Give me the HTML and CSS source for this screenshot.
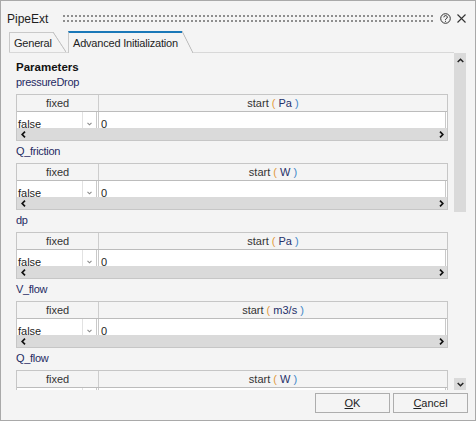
FILE: index.html
```html
<!DOCTYPE html>
<html lang="en">
<head>
    <meta charset="UTF-8">
    <title>PipeExt</title>
    <link rel="stylesheet" href="styles.css">
</head>
<body>
    <div class="dialog">
        <div class="titlebar">
            <span class="title">PipeExt</span>
            <div class="grip"></div>
            <svg class="help" width="11" height="11" viewBox="0 0 11 11">
                <circle cx="5.5" cy="5.5" r="4.8" fill="none" stroke="#333" stroke-width="1"/>
                <path d="M3.9 4.3 A1.7 1.6 0 1 1 6.2 5.7 C5.6 6 5.5 6.3 5.5 7" fill="none" stroke="#333" stroke-width="1"/>
                <rect x="5" y="7.8" width="1" height="1" fill="#333"/>
            </svg>
            <svg class="close" width="9" height="9" viewBox="0 0 9 9">
                <path d="M0.5 0.5 L8.5 8.5 M8.5 0.5 L0.5 8.5" stroke="#333" stroke-width="1.1"/>
            </svg>
        </div>

        <div class="tabs">
            <div class="tab tab-general">General</div>
            <div class="tab active">Advanced Initialization</div>
        </div>

        <div class="panel">
            <div class="scroll">
                <div class="heading">Parameters</div>

                <div class="param">
                    <div class="param-name">pressureDrop</div>
                    <div class="grid">
                        <div class="grid-head">
                            <div class="col-fixed">fixed</div>
                            <div class="col-start">start <span class="po">(</span><span class="unit"> Pa </span><span class="pc">)</span></div>
                        </div>
                        <div class="grid-row">
                            <div class="cell-fixed">
                                <div class="cell-text">false</div>
                                <div class="drop"><svg width="5" height="4" viewBox="0 0 5 4"><path d="M0.5 0.8 L2.5 2.8 L4.5 0.8" fill="none" stroke="#8a8a8a" stroke-width="1.1"/></svg></div>
                            </div>
                            <div class="cell-value">0</div>
                        </div>
                        <div class="hscroll">
                            <svg width="5" height="7" viewBox="0 0 5 7"><path d="M4 0.7 L1.2 3.5 L4 6.3" fill="none" stroke="#111" stroke-width="1.7"/></svg>
                            <svg width="5" height="7" viewBox="0 0 5 7"><path d="M1 0.7 L3.8 3.5 L1 6.3" fill="none" stroke="#111" stroke-width="1.7"/></svg>
                        </div>
                    </div>
                </div>

                <div class="param">
                    <div class="param-name">Q_friction</div>
                    <div class="grid">
                        <div class="grid-head">
                            <div class="col-fixed">fixed</div>
                            <div class="col-start">start <span class="po">(</span><span class="unit"> W </span><span class="pc">)</span></div>
                        </div>
                        <div class="grid-row">
                            <div class="cell-fixed">
                                <div class="cell-text">false</div>
                                <div class="drop"><svg width="5" height="4" viewBox="0 0 5 4"><path d="M0.5 0.8 L2.5 2.8 L4.5 0.8" fill="none" stroke="#8a8a8a" stroke-width="1.1"/></svg></div>
                            </div>
                            <div class="cell-value">0</div>
                        </div>
                        <div class="hscroll">
                            <svg width="5" height="7" viewBox="0 0 5 7"><path d="M4 0.7 L1.2 3.5 L4 6.3" fill="none" stroke="#111" stroke-width="1.7"/></svg>
                            <svg width="5" height="7" viewBox="0 0 5 7"><path d="M1 0.7 L3.8 3.5 L1 6.3" fill="none" stroke="#111" stroke-width="1.7"/></svg>
                        </div>
                    </div>
                </div>

                <div class="param">
                    <div class="param-name">dp</div>
                    <div class="grid">
                        <div class="grid-head">
                            <div class="col-fixed">fixed</div>
                            <div class="col-start">start <span class="po">(</span><span class="unit"> Pa </span><span class="pc">)</span></div>
                        </div>
                        <div class="grid-row">
                            <div class="cell-fixed">
                                <div class="cell-text">false</div>
                                <div class="drop"><svg width="5" height="4" viewBox="0 0 5 4"><path d="M0.5 0.8 L2.5 2.8 L4.5 0.8" fill="none" stroke="#8a8a8a" stroke-width="1.1"/></svg></div>
                            </div>
                            <div class="cell-value">0</div>
                        </div>
                        <div class="hscroll">
                            <svg width="5" height="7" viewBox="0 0 5 7"><path d="M4 0.7 L1.2 3.5 L4 6.3" fill="none" stroke="#111" stroke-width="1.7"/></svg>
                            <svg width="5" height="7" viewBox="0 0 5 7"><path d="M1 0.7 L3.8 3.5 L1 6.3" fill="none" stroke="#111" stroke-width="1.7"/></svg>
                        </div>
                    </div>
                </div>

                <div class="param">
                    <div class="param-name">V_flow</div>
                    <div class="grid">
                        <div class="grid-head">
                            <div class="col-fixed">fixed</div>
                            <div class="col-start">start <span class="po">(</span><span class="unit"> m3/s </span><span class="pc">)</span></div>
                        </div>
                        <div class="grid-row">
                            <div class="cell-fixed">
                                <div class="cell-text">false</div>
                                <div class="drop"><svg width="5" height="4" viewBox="0 0 5 4"><path d="M0.5 0.8 L2.5 2.8 L4.5 0.8" fill="none" stroke="#8a8a8a" stroke-width="1.1"/></svg></div>
                            </div>
                            <div class="cell-value">0</div>
                        </div>
                        <div class="hscroll">
                            <svg width="5" height="7" viewBox="0 0 5 7"><path d="M4 0.7 L1.2 3.5 L4 6.3" fill="none" stroke="#111" stroke-width="1.7"/></svg>
                            <svg width="5" height="7" viewBox="0 0 5 7"><path d="M1 0.7 L3.8 3.5 L1 6.3" fill="none" stroke="#111" stroke-width="1.7"/></svg>
                        </div>
                    </div>
                </div>

                <div class="param">
                    <div class="param-name">Q_flow</div>
                    <div class="grid">
                        <div class="grid-head">
                            <div class="col-fixed">fixed</div>
                            <div class="col-start">start <span class="po">(</span><span class="unit"> W </span><span class="pc">)</span></div>
                        </div>
                        <div class="grid-row">
                            <div class="cell-fixed">
                                <div class="cell-text">false</div>
                                <div class="drop"><svg width="5" height="4" viewBox="0 0 5 4"><path d="M0.5 0.8 L2.5 2.8 L4.5 0.8" fill="none" stroke="#8a8a8a" stroke-width="1.1"/></svg></div>
                            </div>
                            <div class="cell-value">0</div>
                        </div>
                        <div class="hscroll">
                            <svg width="5" height="7" viewBox="0 0 5 7"><path d="M4 0.7 L1.2 3.5 L4 6.3" fill="none" stroke="#111" stroke-width="1.7"/></svg>
                            <svg width="5" height="7" viewBox="0 0 5 7"><path d="M1 0.7 L3.8 3.5 L1 6.3" fill="none" stroke="#111" stroke-width="1.7"/></svg>
                        </div>
                    </div>
                </div>
            </div>

            <div class="vscroll">
                <div class="vthumb">
                    <svg width="7" height="5" viewBox="0 0 7 5"><path d="M0.7 4 L3.5 1.2 L6.3 4" fill="none" stroke="#222" stroke-width="1.5"/></svg>
                </div>
                <div class="vdown">
                    <svg width="7" height="5" viewBox="0 0 7 5"><path d="M0.7 1 L3.5 3.8 L6.3 1" fill="none" stroke="#222" stroke-width="1.5"/></svg>
                </div>
            </div>
        </div>

        <div class="footer">
            <button type="button"><u>O</u>K</button>
            <button type="button"><u>C</u>ancel</button>
        </div>
    </div>
</body>
</html>
```

FILE: styles.css
```css
body {
    margin: 0;
    font-family: "Liberation Sans", Arial, sans-serif;
    font-size: 11px;
    color: #1e1e1e;
}
.dialog {
    width: 476px;
    height: 421px;
    box-sizing: border-box;
    border: 1px solid #a9a9a9;
    background-color: #f4f4f4;
    display: flex;
    flex-direction: column;
}

/* title bar */
.titlebar {
    height: 30px;
    flex: none;
    box-sizing: border-box;
    padding: 5px 9px 0 6px;
    display: flex;
    align-items: center;
}
.title {
    font-size: 12px;
    margin-top: 1px;
}
.grip {
    flex: 1;
    height: 7px;
    margin: 0 6px 0 15px;
    background-image: linear-gradient(90deg, transparent 2px, #f4f4f4 2px), linear-gradient(#8e8e8e 2px, transparent 2px);
    background-size: 4px 5px;
}
.help {
    display: block;
    margin-right: 6px;
}
.close {
    display: block;
}

/* tabs */
.tabs {
    height: 22px;
    flex: none;
    box-sizing: border-box;
    margin: 0 21px 0 8px;
    border-bottom: 1px solid #d8d8d8;
    display: flex;
    align-items: flex-end;
}
.tab {
    position: relative;
    box-sizing: border-box;
    height: 20px;
    border-left: 1px solid #c9c9c9;
    border-top: 1px solid #c9c9c9;
    padding: 4px 0 0 4px;
    line-height: 13px;
    letter-spacing: -0.2px;
    white-space: nowrap;
    background-color: #f4f4f4;
}
.tab::after {
    content: "";
    position: absolute;
    top: -1px;
    right: -13px;
    width: 13px;
    height: 20px;
    background: linear-gradient(to top right, #f4f4f4 calc(50% - 0.8px), #c4c4c4 calc(50% - 0.2px), #c4c4c4 calc(50% + 0.2px), transparent calc(50% + 0.8px));
}
.tab-general {
    width: 44px;
    margin-right: 15px;
}
.tab.active {
    width: 114px;
    height: 22px;
    margin-bottom: -1px;
    border-top: 2px solid #1a78b8;
    padding-top: 4px;
}
.tab.active::after {
    top: -2px;
    right: -11px;
    width: 11px;
    height: 22px;
}

/* scrolling parameter area */
.panel {
    flex: 1;
    min-height: 0;
    display: flex;
}
.scroll {
    flex: 1;
    overflow: hidden;
    padding: 6px 6px 0 15px;
}
.heading {
    font-weight: bold;
    font-size: 11.5px;
    line-height: 16px;
    color: #111;
}
.param {
    margin-bottom: 3px;
}
.param-name {
    line-height: 15px;
    margin-bottom: 4px;
    letter-spacing: -0.3px;
    color: #1f2a63;
}
.grid {
    border: 1px solid #c6c6c6;
}
.grid-head {
    display: flex;
    height: 16px;
    line-height: 16px;
    text-align: center;
    color: #333;
    border-bottom: 1px solid #bcbcbc;
}
.col-fixed {
    width: 82px;
    box-sizing: border-box;
    border-right: 1px solid #cdcdcd;
}
.col-start {
    flex: 1;
    white-space: pre;
}
.po {
    color: #e39a3c;
}
.unit {
    color: #24306a;
}
.pc {
    color: #3f86c8;
}
.grid-row {
    display: flex;
    height: 16px;
    overflow: hidden;
    background-color: #fff;
}
.cell-fixed {
    width: 80px;
    box-sizing: border-box;
    border-right: 1px solid #c9c9c9;
    display: flex;
}
.cell-text {
    flex: 1;
    padding: 6px 0 0 1px;
    line-height: 13px;
}
.drop {
    width: 14px;
    box-sizing: border-box;
    border-left: 1px solid #e2e2e2;
    padding: 10px 0 0 4px;
}
.drop svg {
    display: block;
}
.cell-value {
    flex: 1;
    margin: 0 1px;
    border-left: 1px solid #c9c9c9;
    border-right: 1px solid #c9c9c9;
    padding: 6px 0 0 2px;
    line-height: 13px;
}
.hscroll {
    height: 12px;
    background-color: #dadada;
    display: flex;
    justify-content: space-between;
    align-items: center;
    padding: 0 3px 0 4px;
}
.hscroll svg {
    display: block;
}

/* vertical scrollbar */
.vscroll {
    width: 12px;
    flex: none;
    margin-right: 9px;
    display: flex;
    flex-direction: column;
    justify-content: space-between;
}
.vthumb {
    height: 159px;
    background-color: #dadada;
    display: flex;
    justify-content: center;
    padding-top: 5px;
    box-sizing: border-box;
}
.vthumb svg,
.vdown svg {
    display: block;
}
.vdown {
    height: 12px;
    background-color: #dadada;
    display: flex;
    justify-content: center;
    align-items: center;
}

/* buttons */
.footer {
    height: 30px;
    flex: none;
    box-sizing: border-box;
    padding: 3px 7px 0 0;
    display: flex;
    justify-content: flex-end;
    gap: 3px;
}
.footer button {
    width: 75px;
    height: 20px;
    padding: 0;
    border: 1px solid #adadad;
    background-color: #f4f4f4;
    font-family: "Liberation Sans", Arial, sans-serif;
    font-size: 11px;
    color: #1e1e1e;
}
```
